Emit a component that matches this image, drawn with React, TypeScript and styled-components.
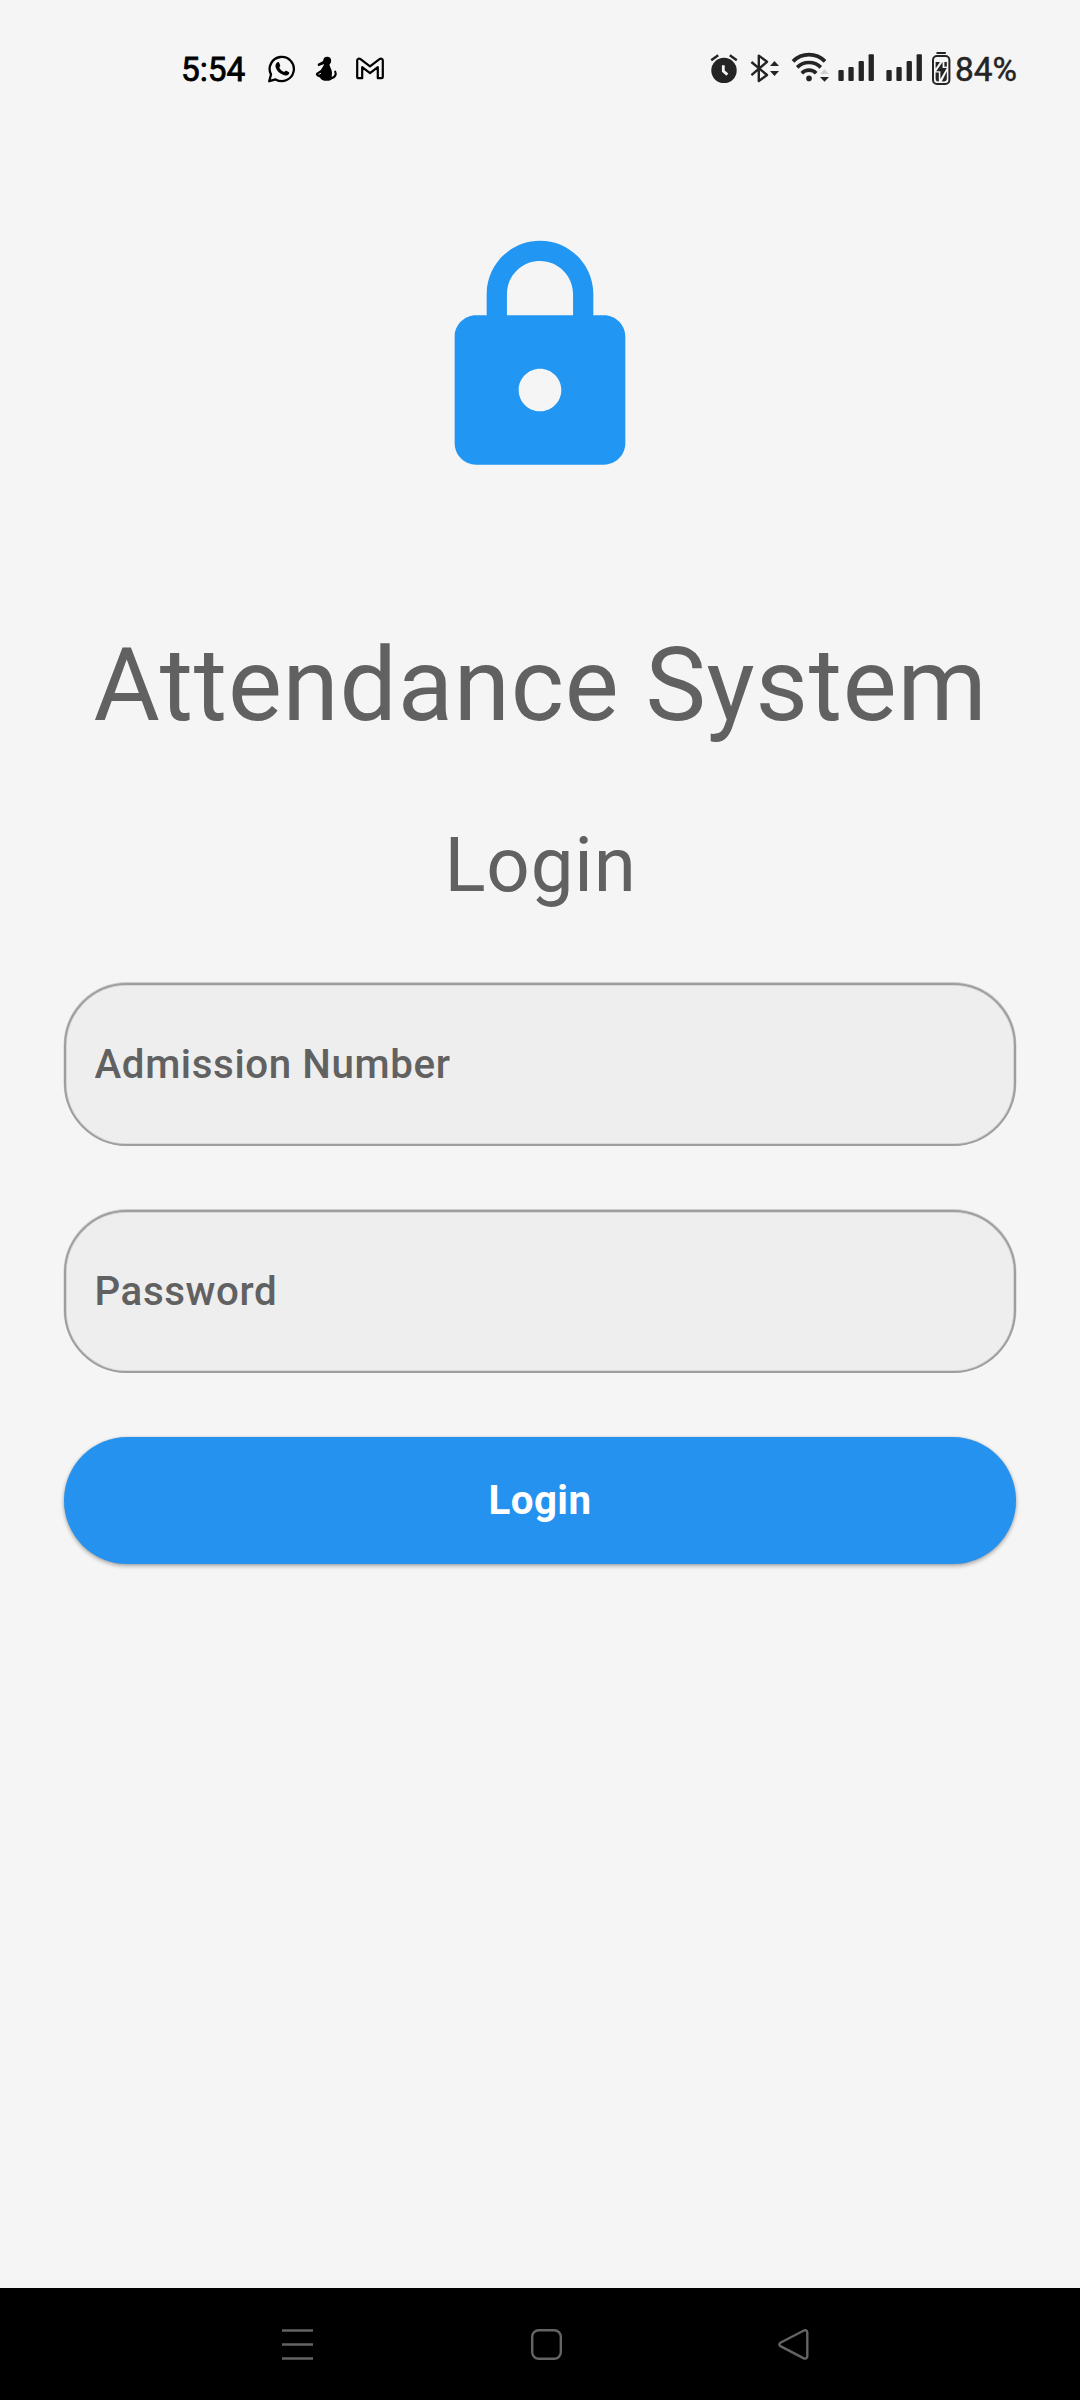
import React from 'react';
import styled, { createGlobalStyle } from 'styled-components';

const GlobalStyle = createGlobalStyle`
  * { box-sizing: border-box; }
  body { margin: 0; background: #f5f5f5; }
`;

const Screen = styled.div`
  width: 1080px;
  height: 2400px;
  display: flex;
  flex-direction: column;
  background: #f5f5f5;
  font-family: Roboto, 'Liberation Sans', sans-serif;
`;

const StatusBar = styled.header`
  height: 140px;
  padding: 0 63px 0 181px;
  display: flex;
  align-items: center;
  justify-content: space-between;
`;

const StatusGroup = styled.div<{ $tint: string }>`
  display: flex;
  align-items: center;
  color: ${(p) => p.$tint};
`;

const StatusText = styled.span<{ $width: number; $gap?: number; $stroke: number }>`
  width: ${(p) => p.$width}px;
  margin-left: ${(p) => p.$gap ?? 0}px;
  font-size: 33.4px;
  font-weight: 400;
  -webkit-text-stroke: ${(p) => p.$stroke}px currentColor;
  line-height: 40px;
  white-space: nowrap;
`;

const Glyph = styled.svg<{ $gap?: number }>`
  display: block;
  flex: none;
  margin-left: ${(p) => p.$gap ?? 0}px;
`;

const Main = styled.main`
  flex: 1;
  padding: 90px 64px 0;
  display: flex;
  flex-direction: column;
  align-items: center;
`;

const LockIcon = styled.svg`
  width: 256px;
  height: 256px;
  fill: #2196f3;
`;

const Title = styled.h1`
  margin: 140px 0 0;
  padding-left: 1px;
  font-size: 101.76px;
  font-weight: 400;
  line-height: 120px;
  letter-spacing: 0.75px;
  color: #616161;
  white-space: nowrap;
`;

const Subtitle = styled.h2`
  margin: 74px 0 0;
  padding-left: 1px;
  font-size: 76.32px;
  font-weight: 400;
  line-height: 90px;
  letter-spacing: 0.8px;
  color: #616161;
`;

const Form = styled.form`
  align-self: stretch;
  margin-top: 73px;
  display: flex;
  flex-direction: column;
  gap: 64px;
`;

const Field = styled.input`
  height: 163px;
  padding: 0 28.5px;
  border: 2px solid #9e9e9e;
  border-radius: 63px;
  outline: none;
  background: #eeeeee;
  box-shadow: 0 -0.5px 0 0.5px rgba(158, 158, 158, 0.45), inset 0 0 0 0.5px rgba(158, 158, 158, 0.5);
  font-family: inherit;
  font-size: 40.3px;
  font-weight: 500;
  letter-spacing: 0.6px;
  color: #616161;

  &::placeholder {
    color: #616161;
    opacity: 1;
  }
`;

const SubmitButton = styled.button`
  height: 127px;
  padding: 0;
  border: 0;
  border-radius: 64px;
  background: #2592f0;
  box-shadow: 0 2px 4px rgba(0, 0, 0, 0.32), 0 0 2px rgba(0, 0, 0, 0.14);
  font-family: inherit;
  font-size: 40.3px;
  font-weight: 700;
  line-height: 47px;
  letter-spacing: 0.4px;
  color: #ffffff;
`;

const NavBar = styled.nav`
  height: 112px;
  padding: 0 271px 0 282px;
  display: flex;
  align-items: center;
  justify-content: space-between;
  background: #000000;
`;

const NavGlyph = styled.svg<{ $shift?: number }>`
  display: block;
  width: 31px;
  height: 31px;
  margin-left: ${(p) => p.$shift ?? 0}px;
  fill: none;
  stroke: #646464;
  stroke-width: 2.4;
`;

const ChatIcon = () => (
  <Glyph $gap={19} width="30" height="40" viewBox="0 0 30 40">
    <path
      d="M2.2 31.2 L4 24.5 A12.1 12.1 0 1 1 8.6 29.4 Z"
      fill="none"
      stroke="currentColor"
      strokeWidth="2.3"
      strokeLinejoin="round"
    />
    <path
      d="M10.2 12.4 C11.2 11.8 12 12.2 12.4 13.2 L13.2 15.2 C13.5 16 12.8 16.6 12.3 17.4 C13.2 19.6 15 21.2 17.2 22 C18 21.3 18.5 20.4 19.3 20.8 L21.7 22 C22.5 22.5 22.2 23.6 21.7 24.2 C20.4 25.8 18 25.7 16 24.8 C12.4 23.3 10 21 8.8 17.8 C8.1 15.6 8.6 13.4 10.2 12.4 Z"
      fill="currentColor"
    />
  </Glyph>
);

const FigureIcon = () => (
  <Glyph $gap={18} width="24" height="40" viewBox="0 0 24 40">
    <g fill="currentColor">
      <circle cx="12.2" cy="10.7" r="3.9" />
      <path d="M9 10.5 L2.6 14 L3.2 16.2 L10.8 13.6 Z" />
      <path d="M9.4 13.6 L14.6 13.6 C14.2 16 15.4 17.4 16.2 19.2 C17.4 22 17 24.8 16.6 26.4 L18.4 28 C16.6 30.2 14.6 30.8 11.6 30.8 C8.4 30.8 5.6 29.6 5 27.4 C3.2 26.8 0.8 25.6 0.8 24.2 C1.2 22.2 5.2 21.4 6.6 18.8 C7.6 17 8.8 15.6 9.4 13.6 Z" />
    </g>
    <path
      d="M16.6 28 C20 27.4 21.6 24.4 20.2 21.6"
      fill="none"
      stroke="currentColor"
      strokeWidth="2.1"
      strokeLinecap="round"
    />
    <path d="M3.6 24.4 L6 23.2" stroke="#f5f5f5" strokeWidth="0.9" />
  </Glyph>
);

const MailIcon = () => (
  <Glyph $gap={16} width="30" height="40" viewBox="0 0 30 40">
    <path
      d="M2.2 27 V10.2 C2.2 8.6 4.2 8.2 5.5 9.2 L15 16.4 L24.5 9.2 C25.8 8.2 27.8 8.6 27.8 10.2 V27 C27.8 27.8 27.4 28.2 26.6 28.2 H22.8 V17.2 L15 23.1 L7.2 17.2 V28.2 H3.4 C2.6 28.2 2.2 27.8 2.2 27 Z"
      fill="none"
      stroke="currentColor"
      strokeWidth="2.2"
      strokeLinejoin="round"
    />
  </Glyph>
);

const AlarmIcon = () => (
  <Glyph width="28" height="40" viewBox="0 0 28 40">
    <circle cx="14" cy="20.4" r="12.7" fill="currentColor" />
    <path d="M1.2 10.2 L8.2 5.2 M19.8 5.2 L26.8 10.2" stroke="currentColor" strokeWidth="2.5" />
    <path d="M13.3 15.2 V21.2 L17.4 24.6" fill="none" stroke="#f5f5f5" strokeWidth="2.8" />
  </Glyph>
);

const BluetoothIcon = () => (
  <Glyph $gap={12} width="30" height="40" viewBox="0 0 30 40">
    <path
      d="M1.4 12 L17 25 L8.8 31 V5.6 L17 11.8 L1.4 25.2"
      fill="none"
      stroke="currentColor"
      strokeWidth="2.4"
      strokeLinejoin="round"
    />
    <path d="M20 16 L24.5 11 L29 16 Z M20 21 H29 L24.5 26 Z" fill="currentColor" />
  </Glyph>
);

const WifiIcon = () => (
  <Glyph $gap={10} width="40" height="40" viewBox="0 0 40 40">
    <g fill="none" stroke="currentColor" strokeWidth="3.7">
      <path d="M3 11.4 A22.5 22.5 0 0 1 35 11.4" />
      <path d="M7.2 17.4 A16.6 16.6 0 0 1 30.8 17.4" />
      <path d="M11.8 23.2 A10 10 0 0 1 26.2 23.2" />
    </g>
    <circle cx="19" cy="28.4" r="2.8" fill="currentColor" />
    <path d="M30 24 L34.5 19 L39 24 Z" fill="#d0d0d0" />
    <path d="M30 27 H39 L34.5 31.8 Z" fill="currentColor" />
  </Glyph>
);

const SignalIcon = ({ gap }: { gap: number }) => (
  <Glyph $gap={gap} width="37" height="40" viewBox="0 0 37 40">
    <g fill="currentColor">
      <rect x="0.4" y="20" width="5.3" height="11" rx="1" />
      <rect x="10.4" y="17" width="5.3" height="14" rx="1" />
      <rect x="20.6" y="11" width="5.3" height="20" rx="1" />
      <rect x="30.6" y="4.2" width="5.3" height="26.8" rx="1" />
    </g>
  </Glyph>
);

const BatteryIcon = () => (
  <Glyph $gap={9} width="20" height="40" viewBox="0 0 20 40">
    <rect x="4.5" y="2" width="9.3" height="2" fill="currentColor" />
    <rect x="1" y="6" width="16.4" height="28" rx="4" fill="none" stroke="currentColor" strokeWidth="2" />
    <path d="M3.6 12 H8 L3.6 18.4 Z" fill="currentColor" />
    <path d="M14.8 21.4 V28.5 A3 3 0 0 1 11.8 31.4 H9.8 Z" fill="currentColor" />
    <path d="M3.6 22.6 H6.8 V31.4 A3 3 0 0 1 3.6 28.5 Z" fill="currentColor" />
    <path d="M10.6 12 L4.2 21.2 H8.4 V29 L14.8 18 H10.6 Z" fill="currentColor" />
    <path d="M12.4 12 H14.8 V16.6 H12.4 Z" fill="currentColor" />
  </Glyph>
);

export default function App() {
  return (
    <>
      <GlobalStyle />
      <Screen>
        <StatusBar>
          <StatusGroup $tint="#000000">
            <StatusText $width={67} $stroke={0.8}>5:54</StatusText>
            <ChatIcon />
            <FigureIcon />
            <MailIcon />
          </StatusGroup>
          <StatusGroup $tint="#242424">
            <AlarmIcon />
            <BluetoothIcon />
            <WifiIcon />
            <SignalIcon gap={8} />
            <SignalIcon gap={11} />
            <BatteryIcon />
            <StatusText $width={62} $gap={3} $stroke={0.5}>84%</StatusText>
          </StatusGroup>
        </StatusBar>
        <Main>
          <LockIcon viewBox="0 0 24 24">
            <path d="M18 8h-1V6c0-2.76-2.24-5-5-5S7 3.24 7 6v2H6c-1.1 0-2 .9-2 2v10c0 1.1.9 2 2 2h12c1.1 0 2-.9 2-2V10c0-1.1-.9-2-2-2zm-6 9c-1.1 0-2-.9-2-2s.9-2 2-2 2 .9 2 2-.9 2-2 2zm3.1-9H8.9V6c0-1.71 1.39-3.1 3.1-3.1 1.71 0 3.1 1.39 3.1 3.1v2z" />
          </LockIcon>
          <Title>Attendance System</Title>
          <Subtitle>Login</Subtitle>
          <Form onSubmit={(e) => e.preventDefault()}>
            <Field type="text" placeholder="Admission Number" />
            <Field type="password" placeholder="Password" />
            <SubmitButton type="submit">Login</SubmitButton>
          </Form>
        </Main>
        <NavBar>
          <NavGlyph viewBox="0 0 31 31">
            <path d="M0 1.5 H31 M0 15.5 H31 M0 29.5 H31" />
          </NavGlyph>
          <NavGlyph $shift={2} viewBox="0 0 31 31">
            <rect x="1.2" y="1.2" width="28.6" height="28.6" rx="6.5" />
          </NavGlyph>
          <NavGlyph viewBox="0 0 31 31">
            <path d="M2.4 13.7 L25.4 1.7 C27.4 0.6 29.3 1.4 29.3 3.6 V27.2 C29.3 29.4 27.4 30.2 25.4 29.1 L2.4 17.1 C1 16.3 1 14.5 2.4 13.7 Z" />
          </NavGlyph>
        </NavBar>
      </Screen>
    </>
  );
}
